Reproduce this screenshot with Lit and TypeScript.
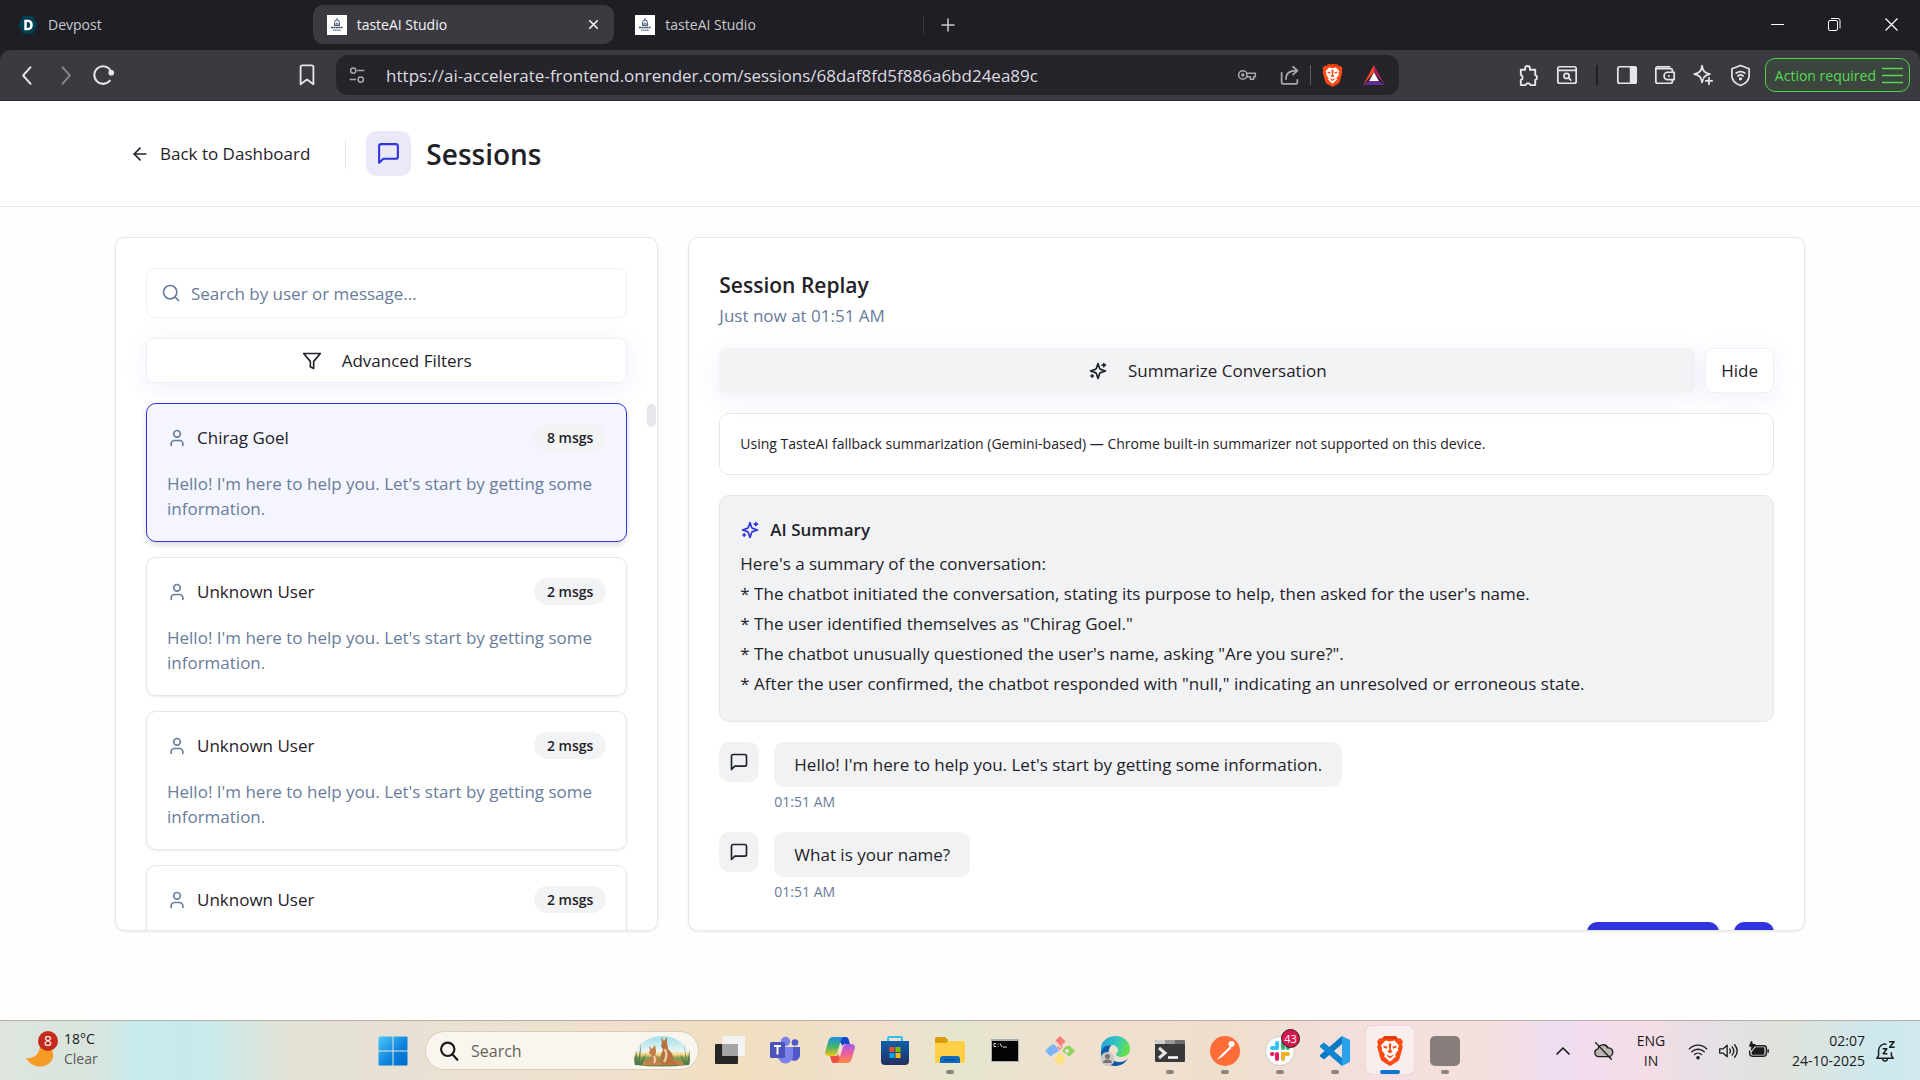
import { LitElement, html, svg, css, nothing, TemplateResult, SVGTemplateResult } from "lit";
import { customElement, state } from "lit/decorators.js";
import { classMap } from "lit/directives/class-map.js";

/* ---------- shared ---------- */

const base = css`
  :host {
    display: block;
    box-sizing: border-box;
    font-family: "Open Sans", "Noto Sans", "Liberation Sans", sans-serif;
    font-size: 17px;
    line-height: 25px;
    color: #1f2228;
  }
  * {
    box-sizing: border-box;
  }
  button,
  input {
    font: inherit;
    color: inherit;
    background: none;
    border: 0;
    padding: 0;
    margin: 0;
    outline: none;
  }
  svg {
    display: block;
    flex: none;
  }
  h1,
  h2,
  h3,
  p,
  ul {
    margin: 0;
    padding: 0;
    font-weight: inherit;
    font-size: inherit;
  }
  ul {
    list-style: none;
  }
`;

const line = (body: SVGTemplateResult, size = 20, width = 2): TemplateResult => html`<svg
  width=${size} height=${size} viewBox="0 0 24 24" fill="none" stroke="currentColor"
  stroke-width=${width} stroke-linecap="round" stroke-linejoin="round" aria-hidden="true">${body}</svg>`;

const glyph = (body: SVGTemplateResult, size = 30, box = 30): TemplateResult => html`<svg
  width=${size} height=${size} viewBox="0 0 ${box} ${box}" fill="none" aria-hidden="true">${body}</svg>`;

const icons = {
  arrowLeft: svg`<path d="m12 19-7-7 7-7"/><path d="M19 12H5"/>`,
  message: svg`<path d="M21 15a2 2 0 0 1-2 2H7l-4 4V5a2 2 0 0 1 2-2h14a2 2 0 0 1 2 2z"/>`,
  search: svg`<circle cx="11" cy="11" r="8"/><path d="m21 21-4.3-4.3"/>`,
  filter: svg`<polygon points="22 3 2 3 10 12.46 10 19 14 21 14 12.46 22 3"/>`,
  user: svg`<path d="M19 21v-2a4 4 0 0 0-4-4H9a4 4 0 0 0-4 4v2"/><circle cx="12" cy="7" r="4"/>`,
  sparkles: svg`<path d="m12 3-1.912 5.813a2 2 0 0 1-1.275 1.275L3 12l5.813 1.912a2 2 0 0 1 1.275 1.275L12 21l1.912-5.813a2 2 0 0 1 1.275-1.275L21 12l-5.813-1.912a2 2 0 0 1-1.275-1.275L12 3Z"/><path d="M5 16.5v3M3.5 18h3M19 3v4M17 5h4"/>`,
};

const lion = svg`
  <path d="M15 0 20.5 0 23 2.6 25.4 2.2 28 5.4 27 8.4 27.8 11 24.6 22.4Q24 24.4 22.4 25.6L15 30 7.6 25.6Q6 24.4 5.4 22.4L2.2 11 3 8.4 2 5.4 4.6 2.2 7 2.6 9.5 0Z" fill="#fb4b14"/>
  <path d="M15 0 20.5 0 23 2.6 20 3.4 15 2.6 10 3.4 7 2.6 9.5 0Z" fill="#e03c08"/>
  <path d="M15 5.4 19.4 4.5 24 9.6 22.8 12.4 23.2 14.2 20 18.6 21 20.2 15 25.8 9 20.2 10 18.6 6.8 14.2 7.2 12.4 6 9.6 10.6 4.5Z" fill="#fff"/>
  <path d="M8.2 9.8 12.6 10.6 11.8 12.8 8.8 11.8ZM21.8 9.8 17.4 10.6 18.2 12.8 21.2 11.8ZM13.6 7.4H16.4L15.8 13.6 17.6 15.6 15 17.4 12.4 15.6 14.2 13.6ZM11 18.4 15 20.2 19 18.4 17 21 15 22.2 13 21Z" fill="#fb4b14"/>`;

/* ---------- browser window frame ---------- */

const favicon = html`<svg width="20" height="20" viewBox="0 0 20 20" fill="none" aria-hidden="true">
  <rect width="20" height="20" fill="#fff"/>
  <path d="M10 3v2M7.5 7.5a2.5 2.5 0 0 1 5 0V10h-5zM8.5 8.2h3M7 10.4h6" stroke="#4b5876" stroke-width="1"/>
  <path d="M4 12.5h12" stroke="#39466a" stroke-width="1.6" stroke-dasharray="2 .4"/>
  <path d="M6 15.2h8" stroke="#7b859d" stroke-width="1.4" stroke-dasharray="1.6 .4"/>
</svg>`;

const devpostIcon = html`<svg width="20" height="20" viewBox="0 0 20 20" aria-hidden="true">
  <path d="M5.2 1h9.6L19.6 10l-4.8 9H5.2L.4 10z" fill="#003e54"/>
  <path fill-rule="evenodd" d="M6.3 4.8h3.4c3.4 0 5.1 2.1 5.1 5.200s-1.700 5.200-5.100 5.200H6.300zm2.500 2.200v6h.9c1.700 0 2.500-1.100 2.500-3s-.8-3-2.500-3z" fill="#fff"/>
</svg>`;

interface Tab {
  title: string;
  icon: TemplateResult;
  active?: boolean;
}

@customElement("browser-frame")
export class BrowserFrame extends LitElement {
  static styles = [
    base,
    css`
      :host {
        background: #1f1e24;
        color: #c9c8cd;
      }
      .strip {
        display: flex;
        height: 50px;
        padding: 5px 0 6px 4px;
      }
      .tabs {
        display: flex;
        gap: 7px;
        flex: 0 1 920px;
        min-width: 0;
      }
      .tab {
        flex: 1;
        min-width: 0;
        display: flex;
        align-items: center;
        gap: 10px;
        padding: 0 14px;
        border-radius: 10px;
        font-size: 14px;
      }
      .tab.active {
        background: #3b3a40;
        color: #f4f4f6;
      }
      .open {
        flex: 1;
        display: flex;
        align-items: center;
        gap: 10px;
        text-align: left;
        white-space: nowrap;
      }
      .add {
        display: flex;
        align-items: center;
        padding-left: 15px;
      }
      .tab:last-child {
        border-right: 1px solid #3c3b42;
        border-radius: 0;
        margin: 10px 0;
      }
      .window {
        display: flex;
        margin-left: auto;
      }
      .window button {
        width: 57px;
        display: flex;
        justify-content: center;
        align-items: center;
        color: #fff;
      }
      .bar {
        display: flex;
        align-items: center;
        height: 51px;
        padding: 0 10px 0 8px;
        background: #3b3a40;
        border-radius: 10px 10px 0 0;
        border-bottom: 1px solid #2b2a30;
        color: #e6e5ea;
      }
      .icon {
        width: 38px;
        height: 38px;
        display: flex;
        align-items: center;
        justify-content: center;
        flex: none;
      }
      .dim {
        color: #85848b;
      }
      .before {
        flex: 3 1 0;
      }
      .after {
        flex: 2 1 0;
      }
      .address {
        flex: 0 1 1063px;
        min-width: 0;
        display: flex;
        align-items: center;
        height: 40px;
        margin-left: 10px;
        padding: 0 4px 0 0;
        border-radius: 12px;
        background: #25242a;
        color: #a9a8ae;
      }
      .address input {
        flex: 1;
        min-width: 0;
        padding-left: 8px;
        color: #dcdbe0;
      }
      .address .icon {
        width: 42px;
      }
      .rule {
        width: 1px;
        height: 20px;
        background: #5c5b62;
        flex: none;
      }
      .rule.dark {
        width: 2px;
        margin: 0 10px;
        background: #202024;
      }
      .tools {
        display: flex;
        align-items: center;
      }
      .alert {
        display: flex;
        align-items: center;
        gap: 6px;
        height: 34px;
        margin-left: 5px;
        padding: 0 6px 0 9px;
        border: 1px solid #4cd44c;
        border-radius: 10px;
        background: #3c463f;
        color: #54d952;
        font-size: 14px;
        white-space: nowrap;
      }
    `,
  ];

  private tabs: Tab[] = [
    { title: "Devpost", icon: devpostIcon },
    { title: "tasteAI Studio", icon: favicon, active: true },
    { title: "tasteAI Studio", icon: favicon },
  ];

  render() {
    return html`
      <div class="strip">
        <div class="tabs">
          ${this.tabs.map(
            (t) => html`<div class=${classMap({ tab: true, active: !!t.active })}>
              <button class="open">${t.icon}${t.title}</button>
              ${t.active
                ? html`<button aria-label="Close tab">${line(svg`<path d="M5 5 19 19M19 5 5 19"/>`, 13, 3)}</button>`
                : nothing}
            </div>`,
          )}
        </div>
        <button class="add" aria-label="New tab">${line(svg`<path d="M12 4v16M4 12h16"/>`, 18, 2)}</button>
        <div class="window">
          <button aria-label="Minimize">${glyph(svg`<path d="M1 7.5h13" stroke="#fff"/>`, 15, 15)}</button>
          <button aria-label="Restore">
            ${glyph(svg`<rect x="1.5" y="3.5" width="9" height="10" rx="1.5" stroke="#fff"/><path d="M4 1.5h7a2 2 0 0 1 2 2v8" stroke="#fff"/>`, 15, 15)}
          </button>
          <button aria-label="Close window">${glyph(svg`<path d="M1.5 1.5 13.5 13.5M13.5 1.5 1.5 13.5" stroke="#fff" stroke-width="1.2"/>`, 15, 15)}</button>
        </div>
      </div>
      <div class="bar">
        <button class="icon" aria-label="Back">${line(svg`<path d="M15.5 2.5 7 12l8.5 9.5"/>`, 21, 2.2)}</button>
        <button class="icon dim" aria-label="Forward">${line(svg`<path d="M8.5 2.5 17 12l-8.5 9.5"/>`, 21, 2.2)}</button>
        <button class="icon" aria-label="Reload">
          ${line(svg`<path d="M19.5 18.2A9.6 9.6 0 1 1 20.8 8"/><circle cx="21" cy="9.5" r="2" fill="currentColor"/>`, 22, 2.2)}
        </button>
        <span class="before"></span>
        <button class="icon" aria-label="Bookmark">${line(svg`<path d="M5 3.5A2 2 0 0 1 7 1.500h10a2 2 0 0 1 2 2V22l-7-5-7 5z"/>`, 22, 2)}</button>
        <div class="address">
          <button class="icon" aria-label="Site settings">
            ${line(svg`<circle cx="7" cy="6" r="3.5"/><path d="M13 6h8M3 18h7"/><circle cx="17" cy="18" r="3.5"/>`, 18, 2)}
          </button>
          <input aria-label="Address" value="https://ai-accelerate-frontend.onrender.com/sessions/68daf8fd5f886a6bd24ea89c" />
          <button class="icon" aria-label="Passwords">
            ${line(svg`<circle cx="7" cy="12" r="5"/><circle cx="7" cy="12" r="1.2"/><path d="M12 10h10v4h-2v3h-4v-3h-4.5"/>`, 20, 1.8)}
          </button>
          <button class="icon" aria-label="Share">
            ${line(svg`<path d="M3 9v11a1.5 1.5 0 0 0 1.5 1.5h15A1.5 1.5 0 0 0 21 20v-3M8 16c0-6 4-9.5 12-9.5M16 2l5 4.500-5 4.500"/>`, 21, 2)}
          </button>
          <span class="rule"></span>
          <button class="icon" aria-label="Brave Shields">${glyph(lion, 23)}</button>
          <button class="icon" aria-label="Brave Rewards">
            ${glyph(svg`<path d="M12 2 1 22 12 9.5z" fill="#ff4724"/><path d="M12 2 23 22 12 9.5z" fill="#9e1f63"/><path d="M1 22H23L16.5 18H7.5z" fill="#662d91"/><path d="M12 9.5 16.8 18H7.2z" fill="#fff"/>`, 24, 24)}
          </button>
        </div>
        <span class="after"></span>
        <div class="tools">
          <button class="icon" aria-label="Extensions">
            ${line(svg`<path d="M4 6h4.5V4.500a2.500 2.500 0 0 1 5 0V6H19v5.500a2.600 2.600 0 0 1 0 5V22h-5a2.600 2.600 0 0 0-5 0H4v-5.500a2.600 2.600 0 0 0 0-5z"/>`, 23, 2)}
          </button>
          <button class="icon" aria-label="Search page">
            ${line(svg`<rect x="2" y="3" width="20" height="18" rx="2"/><path d="M2 7h20"/><circle cx="11.5" cy="13" r="2.8"/><path d="m14 15.5 2 2"/>`, 22, 1.9)}
          </button>
          <span class="rule dark"></span>
          <button class="icon" aria-label="Sidebar">
            ${line(svg`<rect x="2" y="3" width="20" height="18" rx="2"/><path d="M16 3h4a2 2 0 0 1 2 2v14a2 2 0 0 1-2 2h-4z" fill="currentColor"/>`, 22, 1.9)}
          </button>
          <button class="icon" aria-label="Wallet">
            ${line(svg`<path d="M20 9V7a2 2 0 0 0-2-2H2.500M2 5v14a2 2 0 0 0 2 2h14a2 2 0 0 0 2-2v-2M2 5a2 2 0 0 1 2-2h13M22 9h-7a4 4 0 0 0 0 8h7zM16 13h.5"/>`, 22, 1.9)}
          </button>
          <button class="icon" aria-label="Assistant">
            ${line(svg`<path d="M11 2c.8 5.500 2.500 7.500 8.500 9-3.500.8-5.500 2-6.800 4M11 2c-.8 5.500-2.500 7.500-8.500 9 6 1.500 7.700 3.500 8.500 9 .3-1 .6-2 1-3M18.500 15v7M15 18.500h7"/>`, 22, 1.9)}
          </button>
          <button class="icon" aria-label="VPN">
            ${line(svg`<path d="M12 1.500 21 5v7c0 5-3.500 8.500-9 10.500C6.500 20.500 3 17 3 12V5zM7.500 9.500c2.500-2.200 6.500-2.200 9 0M9.300 12.500c1.600-1.300 3.800-1.300 5.400 0"/><circle cx="12" cy="15.500" r=".8"/>`, 23, 1.8)}
          </button>
          <button class="alert">Action required ${glyph(svg`<path d="M0 3.500h21M0 10.500h21M0 17.500h21" stroke="#54d952" stroke-width="1.500"/>`, 21, 21)}</button>
        </div>
      </div>
    `;
  }
}

/* ---------- sessions page ---------- */

interface Session {
  name: string;
  count: number;
  preview: string;
}

interface Message {
  text: string;
  time: string;
  mine?: boolean;
}

@customElement("sessions-page")
export class SessionsPage extends LitElement {
  static styles = [
    base,
    css`
      :host {
        display: flex;
        flex-direction: column;
        min-height: 0;
        background: #fefefe;
      }
      header {
        background: #fff;
        border-bottom: 1px solid #e5e7eb;
      }
      .wrap {
        width: 100%;
        max-width: 1750px;
        margin: 0 auto;
        padding: 30px;
      }
      .top {
        display: flex;
        align-items: center;
        gap: 20px;
      }
      .back {
        display: flex;
        align-items: center;
        gap: 10px;
        padding: 10px 15px;
        color: inherit;
        text-decoration: none;
        font-weight: 500;
      }
      .divider {
        width: 1px;
        height: 30px;
        background: #e5e7eb;
      }
      .heading {
        display: flex;
        align-items: center;
        gap: 15px;
        font-size: 28px;
        line-height: 40px;
        font-weight: 600;
      }
      .badge {
        display: grid;
        place-items: center;
        width: 45px;
        height: 45px;
        border-radius: 10px;
        background: #eae9fa;
        color: #3133dd;
      }
      main {
        flex: 1;
        min-height: 0;
      }
      .columns {
        display: grid;
        grid-template-columns: repeat(3, minmax(0, 1fr));
        gap: 30px;
        height: 100%;
        padding-bottom: 89px;
      }
      .panel {
        display: flex;
        flex-direction: column;
        gap: 20px;
        min-height: 0;
        padding: 30px 30px 0;
        border: 1px solid #e5e7eb;
        border-radius: 10px;
        background: #fff;
        box-shadow: 0 1px 3px rgb(0 0 0 / 8%);
        overflow: hidden;
      }
      .replay {
        grid-column: span 2;
      }
      .panel > * {
        flex: none;
      }
      .find {
        display: flex;
        align-items: center;
        gap: 10px;
        height: 50px;
        padding: 0 14px;
        border: 1px solid #f0f1f6;
        border-radius: 8px;
        color: #697c9b;
      }
      .find input {
        flex: 1;
        min-width: 0;
      }
      .find input::placeholder {
        color: #697c9b;
        opacity: 1;
      }
      .btn {
        display: flex;
        align-items: center;
        justify-content: center;
        gap: 20px;
        height: 45px;
        padding: 0 15px;
        border: 1px solid #efeff7;
        border-radius: 8px;
        background: #fff;
        font-weight: 500;
        box-shadow: 0 5px 25px rgb(80 80 220 / 9%);
      }
      .btn.wide {
        flex: 1;
        border-color: #f2f3f5;
        background: #f2f3f5;
      }
      .sessions {
        position: relative;
        display: flex;
        flex-direction: column;
        gap: 15px;
      }
      .thumb {
        position: absolute;
        top: 1px;
        right: -29px;
        width: 9px;
        height: 23px;
        border-radius: 5px;
        background: #e5e7eb;
      }
      .session {
        display: block;
        width: 100%;
        padding: 20px;
        border: 1px solid #e5e7eb;
        border-radius: 10px;
        text-align: left;
        box-shadow: 0 1px 3px rgb(0 0 0 / 8%);
      }
      .session.active {
        border-color: #3133dd;
        background: #f4f5fe;
        box-shadow: 0 3px 6px rgb(0 0 0 / 14%);
      }
      .who {
        display: flex;
        align-items: center;
        gap: 10px;
        height: 27px;
        margin-bottom: 20px;
        font-weight: 500;
      }
      .who svg {
        color: #697c9b;
      }
      .count {
        margin-left: auto;
        padding: 1px 13px;
        border-radius: 14px;
        background: #f2f3f5;
        font-size: 14px;
        font-weight: 600;
      }
      .preview,
      .when,
      .stamp {
        color: #697c9b;
      }
      .title {
        font-size: 21px;
        line-height: 35px;
        font-weight: 600;
      }
      .row {
        display: flex;
        gap: 10px;
      }
      .notice {
        padding: 20px;
        border: 1px solid #e5e7eb;
        border-radius: 10px;
        font-size: 14px;
        line-height: 20px;
      }
      .summary {
        padding: 20px 20px 22px;
        border: 1px solid #e5e7eb;
        border-radius: 10px;
        background: #f1f2f4;
        line-height: 30px;
      }
      .summary h3 {
        display: flex;
        align-items: center;
        gap: 10px;
        margin-bottom: 5px;
        line-height: 28px;
        font-weight: 600;
      }
      .summary svg {
        color: #3133dd;
      }
      .message {
        display: flex;
        align-items: flex-start;
        gap: 15px;
      }
      .message.mine {
        flex-direction: row-reverse;
      }
      .avatar {
        display: grid;
        place-items: center;
        width: 40px;
        height: 40px;
        border-radius: 10px;
        background: #f1f2f4;
      }
      .bubble {
        padding: 10px 20px;
        border-radius: 10px;
        background: #f1f2f4;
      }
      .mine .bubble,
      .mine .avatar {
        background: #3133dd;
        color: #fff;
      }
      .stamp {
        margin-top: 5px;
        font-size: 14px;
        line-height: 20px;
      }
    `,
  ];

  @state() private selected = 0;

  private sessions: Session[] = ["Chirag Goel", "Unknown User", "Unknown User", "Unknown User"].map((name, i) => ({
    name,
    count: i ? 2 : 8,
    preview: "Hello! I'm here to help you. Let's start by getting some information.",
  }));

  private messages: Message[] = [
    { text: "Hello! I'm here to help you. Let's start by getting some information.", time: "01:51 AM" },
    { text: "What is your name?", time: "01:51 AM" },
    { text: "Chirag Goel", time: "01:51 AM", mine: true },
  ];

  private summary = [
    "Here's a summary of the conversation:",
    "* The chatbot initiated the conversation, stating its purpose to help, then asked for the user's name.",
    '* The user identified themselves as "Chirag Goel."',
    '* The chatbot unusually questioned the user\'s name, asking "Are you sure?".',
    '* After the user confirmed, the chatbot responded with "null," indicating an unresolved or erroneous state.',
  ];

  render() {
    return html`
      <header>
        <div class="wrap top">
          <a class="back" href="#dashboard">${line(icons.arrowLeft)}Back to Dashboard</a>
          <span class="divider"></span>
          <div class="heading">
            <span class="badge">${line(icons.message, 25)}</span>
            <h1>Sessions</h1>
          </div>
        </div>
      </header>
      <main>
        <div class="wrap columns">
          <section class="panel">
            <label class="find">
              ${line(icons.search)}
              <input type="text" placeholder="Search by user or message..." aria-label="Search by user or message" />
            </label>
            <button class="btn">${line(icons.filter)}Advanced Filters</button>
            <ul class="sessions">
              ${this.sessions.map(
                (s, i) => html`<li>
                  <button
                    class=${classMap({ session: true, active: i === this.selected })}
                    @click=${() => (this.selected = i)}
                  >
                    <div class="who">${line(icons.user)}${s.name}<span class="count">${s.count} msgs</span></div>
                    <div class="preview">${s.preview}</div>
                  </button>
                </li>`,
              )}
              <li class="thumb" aria-hidden="true"></li>
            </ul>
          </section>
          <section class="panel replay">
            <div>
              <h2 class="title">Session Replay</h2>
              <p class="when">Just now at 01:51 AM</p>
            </div>
            <div class="row">
              <button class="btn wide">${line(icons.sparkles)}Summarize Conversation</button>
              <button class="btn">Hide</button>
            </div>
            <p class="notice">
              Using TasteAI fallback summarization (Gemini-based) — Chrome built-in summarizer not supported on this device.
            </p>
            <div class="summary">
              <h3>${line(icons.sparkles)}AI Summary</h3>
              ${this.summary.map((l) => html`<p>${l}</p>`)}
            </div>
            ${this.messages.map(
              (m) => html`<div class=${classMap({ message: true, mine: !!m.mine })}>
                <span class="avatar">${line(m.mine ? icons.user : icons.message)}</span>
                <div>
                  <p class="bubble">${m.text}</p>
                  <p class="stamp">${m.time}</p>
                </div>
              </div>`,
            )}
          </section>
        </div>
      </main>
    `;
  }
}

/* ---------- desktop taskbar ---------- */

interface App {
  label: string;
  art: SVGTemplateResult;
  running?: boolean;
  focused?: boolean;
}

const apps: App[] = [
  {
    label: "Task view",
    art: svg`<rect x="0" y="8" width="23" height="20" rx="1" fill="#262626"/><rect x="7.5" y="0" width="22.5" height="20" rx="1" fill="#f3f3f3"/><rect x="7.5" y="8" width="15.5" height="12" fill="#a5a5a3"/>`,
  },
  {
    label: "Teams",
    art: svg`<circle cx="25" cy="6.5" r="3.3" fill="#5059c9"/><circle cx="15.5" cy="5.5" r="4.7" fill="#7b83eb"/><path d="M21 11h9v8a5.5 5.5 0 0 1-9 4.5z" fill="#5059c9"/><path d="M8 11h15v9a7.5 7.5 0 0 1-15 0z" fill="#7b83eb"/><rect x="0" y="6" width="15" height="16" rx="1.5" fill="#4b53bc"/><path d="M4 10h7M7.5 10v8.5" stroke="#fff" stroke-width="2"/>`,
  },
  {
    label: "Copilot",
    art: svg`<defs><linearGradient id="ca" x1="0" y1="0" x2="0" y2="1"><stop stop-color="#1b8fe8"/><stop offset=".5" stop-color="#3fb56f"/><stop offset="1" stop-color="#f3c417"/></linearGradient><linearGradient id="cb" x1="0" y1="0" x2="0" y2="1"><stop stop-color="#a25cf0"/><stop offset=".5" stop-color="#ec5f9c"/><stop offset="1" stop-color="#fb8d42"/></linearGradient></defs>
      <path d="M12 1h9q2 0 2.600 2L25 8h-5q-2 0-2.500 2z" fill="#1748c9"/><path d="M18 27H9q-2 0-2.600-2L5 20h6q1.500 0 2-2z" fill="#ee4f45"/>
      <path d="M8 1h11q-2 0-3 3l-4 13q-1 3-4 3H4Q-1 20 .5 15L3.500 4.500Q4.500 1 8 1z" fill="url(#ca)"/>
      <path d="M22 27H11q2 0 3-3l4-13q1-3 4-3h4q5 0 3.500 5l-3 10.500Q25.500 27 22 27z" fill="url(#cb)"/>`,
  },
  {
    label: "Store",
    art: svg`<defs><linearGradient id="st" x1="0" y1="0" x2="0" y2="1"><stop stop-color="#0f5fae"/><stop offset="1" stop-color="#22305e"/></linearGradient></defs><path d="M8 6V2.500Q8 1 9.500 1h11Q22 1 22 2.500V6" stroke="#2cc0f0" stroke-width="2"/><path d="M1 5h28v20a4 4 0 0 1-4 4H5a4 4 0 0 1-4-4z" fill="url(#st)"/><path d="M9.500 11h5v5h-5z" fill="#f25022"/><path d="M15.500 11h5v5h-5z" fill="#7fba00"/><path d="M9.500 17h5v5h-5z" fill="#00a4ef"/><path d="M15.500 17h5v5h-5z" fill="#ffb900"/>`,
  },
  {
    label: "File Explorer",
    running: true,
    art: svg`<path d="M0 3q0-2 2-2h8l3 3v5H0z" fill="#d99a0b"/><path d="M0 7h11l2-2h15q2 0 2 2v18q0 2-2 2H2q-2 0-2-2z" fill="#ffcf45"/><path d="M5 27v-4q0-3 3-3h14q3 0 3 3v4z" fill="#0f6cbd"/><path d="M9 24h12" stroke="#0a4f92" stroke-width="1.5"/>`,
  },
  {
    label: "Command Prompt",
    art: svg`<rect x="1" y="3" width="28" height="23" fill="#aab0b8"/><rect x="2" y="5" width="26" height="20" fill="#050505"/><path d="M4 7.5h2M4 7.5v3h2M8 8v.8M8 10v.8M10 7.5l2 3.5M13 11h4" stroke="#ddd"/>`,
  },
  {
    label: "Git",
    art: svg`<path d="M15 0 20.500 5.500 15 11 9.500 5.500z" fill="#f97c79"/><path d="M15 8 18 11 15 14 12 11z" fill="#f97c79"/><path d="M24.500 9.500 30 15 24.500 20.500 17 15l3-4z" fill="#8fd45f"/><path d="M5.500 9.500 13 15 5.500 20.500 0 15z" fill="#7fb3f8"/><path d="M5.500 9.500 9 8l5 6-1 2z" fill="#7fb3f8"/><path d="M15 16l6 7.500L15 30l-6-6.500z" fill="#fbe07c"/><circle cx="22" cy="15" r="2" fill="#efe1d2"/><path d="m10 5 6 7" stroke="#efe1d2" stroke-width="1.500"/>`,
  },
  {
    label: "Edge",
    art: svg`<defs><linearGradient id="eg" x1="0" y1="0" x2="1" y2=".3"><stop stop-color="#1e9be0"/><stop offset=".6" stop-color="#35c8c0"/><stop offset="1" stop-color="#63e04f"/></linearGradient></defs><path d="M1 12C1 5 8 0 15.500 0 24 0 30 6 30 13c0 5-4 8-9 8-3 0-5-1-5-2.500 0-1 2-1.500 2-4.500 0-3-3-5-6.500-5C6 9 1 13 1 20z" fill="url(#eg)"/><path d="M1 20C0 12 6 9 11.500 9q-3 3-3 7c0 6 5 10 11 10 4 0 7-2 8.500-4-3 6-8 8-13 8C8 30 2 26 1 20z" fill="#0f5aa8"/><circle cx="7.500" cy="23" r="7" fill="#c9c9c9"/><circle cx="7.500" cy="20.500" r="2.500" fill="#77736f"/><path d="M3 27q0-3.500 4.500-3.500T12 27z" fill="#77736f"/>`,
  },
  {
    label: "Terminal",
    running: true,
    art: svg`<rect x="0" y="4" width="30" height="22" rx="1.5" fill="#38393b"/><path d="M0 8V5.500Q0 4 1.500 4H10v4z" fill="#cfcfcf"/><path d="M10 4h10v4H10z" fill="#9a9a9a"/><path d="M20 4h8.500Q30 4 30 5.500V8H20z" fill="#6d6d6d"/><path d="m4 12 6 5-6 5" stroke="#e8e8e8" stroke-width="3"/><path d="M13 21.500h10" stroke="#fff" stroke-width="2.500"/>`,
  },
  {
    label: "Postman",
    running: true,
    art: svg`<circle cx="15" cy="15" r="15" fill="#ff6c37"/><circle cx="21.5" cy="8" r="3" fill="#fff"/><path d="M20 10 10.500 19.500 6.500 24 12 21 21.500 12z" fill="#fff"/><path d="m11 18 8-7.500" stroke="#ff6c37" stroke-width=".8"/>`,
  },
  {
    label: "Slack",
    running: true,
    art: svg`<circle cx="15" cy="15" r="14.5" fill="#fbfbfb" stroke="#d0cdca"/><g stroke-width="4" stroke-linecap="round"><path d="M12 7v4.500M7 12h5" stroke="#36c5f0"/><path d="M18 7v5M23 12h-.5" stroke="#2eb67d"/><path d="M18 23v-5h5" stroke="#ecb22e"/><path d="M12 23v-5M7 18h.5" stroke="#e01e5a"/></g>`,
  },
  {
    label: "Visual Studio Code",
    running: true,
    art: svg`<path d="M22 0 30 4v22l-8 4z" fill="#2ba3ec"/><path d="M22 0v8L4 23.500 0 20.500V19z" fill="#0b78c4"/><path d="M22 30v-8L4 6.500 0 9.500V11z" fill="#1283d0"/>`,
  },
  { label: "Brave", running: true, focused: true, art: lion },
  { label: "Application", running: true, art: svg`<rect width="30" height="30" rx="5" fill="#877e7b"/>` },
];

@customElement("task-bar")
export class TaskBar extends LitElement {
  static styles = [
    base,
    css`
      :host {
        display: flex;
        height: 60px;
        border-top: 1px solid #b4b0a8;
        background: linear-gradient(
          90deg,
          #dee5df 0%,
          #d8e4dd 5%,
          #c7eaec 7%,
          #c9e9ea 11%,
          #e3e2d6 15%,
          #ebe1d2 25%,
          #f0e0cb 33%,
          #f0dfc0 38%,
          #f0e0cb 46%,
          #e6e6ce 50%,
          #f0e0d0 56%,
          #eedfcd 64%,
          #f3dfe0 72%,
          #f4e0dc 77%,
          #f0ddf2 81%,
          #f4dde6 86%,
          #e6e0e6 89%,
          #dfe3dc 93%,
          #cde8ef 98%,
          #d2e9f0 100%
        );
        font-size: 14px;
        line-height: 20px;
        color: #1b1b1b;
      }
      .weather {
        flex: 0 1 365px;
        display: flex;
        align-items: center;
        gap: 6px;
        padding: 0 0 4px 26px;
        text-align: left;
      }
      .weather span {
        display: block;
      }
      .weather .soft {
        color: #5b5b58;
      }
      .center {
        display: flex;
        align-items: center;
      }
      .app {
        position: relative;
        width: 55px;
        height: 59px;
        display: grid;
        place-items: center;
      }
      .app svg {
        position: relative;
      }
      .app.focused::before {
        content: "";
        position: absolute;
        inset: 5px 3px 6px 4px;
        border-radius: 5px;
        background: #f8efec;
        box-shadow: 0 0 1px rgb(0 0 0 / 30%);
      }
      .app.running::after {
        content: "";
        position: absolute;
        bottom: 6px;
        width: 8px;
        height: 4px;
        border-radius: 2px;
        background: #8b857c;
      }
      .app.focused::after {
        width: 20px;
        background: #0a76d4;
      }
      .count {
        position: absolute;
        top: 8px;
        right: 7px;
        width: 19px;
        height: 19px;
        border: 1px solid #3c1320;
        border-radius: 10px;
        background: #d8184f;
        color: #fff;
        font-size: 11px;
        line-height: 17px;
        text-align: center;
      }
      .find {
        display: flex;
        align-items: center;
        gap: 12px;
        width: 274px;
        height: 39px;
        margin: 0 3px 0 5px;
        padding: 0 6px 0 13px;
        border: 1px solid #d8ccbc;
        border-radius: 20px;
        background: #faf5ee;
        font-size: 16px;
      }
      .find input {
        flex: 1;
        min-width: 0;
      }
      .find input::placeholder {
        color: #66625d;
        opacity: 1;
      }
      .tray {
        display: flex;
        align-items: center;
        margin-left: auto;
        padding-right: 20px;
        text-align: center;
      }
      .tray button {
        display: flex;
        align-items: center;
        justify-content: center;
        min-width: 30px;
      }
      .tray .open {
        width: 40px;
      }
      .tray .language {
        display: block;
        width: 50px;
        margin: 0 7px 0 3px;
      }
      .tray .clock {
        display: block;
        width: 92px;
        margin-right: 5px;
        text-align: right;
      }
    `,
  ];

  render() {
    return html`
      <button class="weather">
        <svg width="32" height="38" viewBox="0 0 32 38" aria-hidden="true">
          <path d="M0 28c8 1 14-4 14-13 10-2 16 8 12 15-5 9-20 9-26-2z" fill="#f59a25" />
          <circle cx="22" cy="11" r="10" fill="#c42b1c" />
          <text x="22" y="16" font-size="14" fill="#fff" text-anchor="middle">8</text>
        </svg>
        <span>18°C<span class="soft">Clear</span></span>
      </button>
      <div class="center">
        <button class="app" aria-label="Start">
          ${glyph(svg`<defs><linearGradient id="w" x1="0" y1="0" x2="1" y2="1"><stop stop-color="#4cc9f8"/><stop offset=".6" stop-color="#0a80dc"/><stop offset="1" stop-color="#0069c8"/></linearGradient></defs><path d="M.5 1.500Q.5.500 1.500.500H14.500V14.500H.5zM15.500.500H28.500q1 0 1 1V14.500H15.500zM.5 15.500H14.500V29.500H1.500q-1 0-1-1zM15.500 15.500H29.500v13q0 1-1 1H15.500z" fill="url(#w)"/>`)}
        </button>
        <label class="find">
          ${line(svg`<circle cx="10.5" cy="10" r="8"/><path d="m16 16 6 6.5"/>`, 20, 2.6)}
          <input type="text" placeholder="Search" aria-label="Search" />
          <svg width="60" height="32" viewBox="0 0 60 32" aria-hidden="true">
            <defs>
              <linearGradient id="sky" x1="0" y1="0" x2="0" y2="1">
                <stop stop-color="#9fe0ea" />
                <stop offset=".5" stop-color="#e9f4f2" />
                <stop offset=".62" stop-color="#f7d27a" />
                <stop offset=".7" stop-color="#8aa35a" />
                <stop offset="1" stop-color="#6f7f3f" />
              </linearGradient>
            </defs>
            <path d="M3 30C-2 16 12 1 30 1s32 15 27 29q-27 3-54 0z" fill="url(#sky)" />
            <path d="M3 30q12-8 25-3 14-6 29 3z" fill="#b9854a" />
            <path d="M3 30 4 15l2 13L9 8 8 28l6-10-4 12zM57 30l1-16-3 14L52 8l2 20-6-9 4 11z" fill="#4c7a4a" />
            <path d="M30 8 29 2l3 4 3-4v6q1 4 1 6 6 5 5 11l5 5H30q-3-8 1-15l-2-4z" fill="#b9703f" />
            <path d="M33 14q3 7-1 13" stroke="#eccba4" stroke-width="2.5" fill="none" />
            <path d="m18 15-1-4 3 3 3-4 1 6q0 3-1 4 5 3 3 7l2 3H17q-1-6 3-9l-3-3z" fill="#c57d49" />
            <path d="M22 21q2 4 0 7" stroke="#f0d5b2" stroke-width="2" fill="none" />
          </svg>
        </label>
        ${apps.map(
          (a) => html`<button
            class=${classMap({ app: true, running: !!a.running, focused: !!a.focused })}
            aria-label=${a.label}
          >
            ${glyph(a.art)}${a.label === "Slack" ? html`<span class="count">43</span>` : nothing}
          </button>`,
        )}
      </div>
      <div class="tray">
        <button class="open" aria-label="Show hidden icons">${line(svg`<path d="m4 16 8-8 8 8"/>`, 18, 2.2)}</button>
        <button class="open" aria-label="OneDrive">
          ${line(svg`<path d="M6.5 19a4.5 4.5 0 0 1-.8-8.9A6 6 0 0 1 17 9a5 5 0 0 1 1 10z" fill="#bdb4b4"/><path d="M3 3l18 19"/>`, 21, 1.6)}
        </button>
        <button class="language">ENG<br />IN</button>
        <button aria-label="Wi-Fi">
          ${line(svg`<path d="M1.5 9.5c6-6 15-6 21 0M4.5 13c4.2-4.2 10.8-4.2 15 0M7.8 16.3c2.4-2.4 6-2.4 8.4 0"/><circle cx="12" cy="20" r="1.3" fill="currentColor"/>`, 20, 1.6)}
        </button>
        <button aria-label="Volume">
          ${line(svg`<path d="M2 9.5h4L11 5v14l-5-4.5H2zM14 9.5q2 2.5 0 5M17 7q4 5 0 10M20 4.5q6 7.5 0 15"/>`, 20, 1.6)}
        </button>
        <button aria-label="Battery">
          ${line(svg`<path d="M8 6.5h10a3 3 0 0 1 3 3v6a3 3 0 0 1-3 3H5a3 3 0 0 1-3-3v-3"/><path d="M9 9h9v7H5v-2z" fill="currentColor"/><path d="M23 11v3"/><path d="M4 2 2 7h3L4 11l4-5.5H5z" fill="currentColor"/>`, 21, 1.6)}
        </button>
        <button class="clock">02:07<br />24-10-2025</button>
        <button aria-label="Notifications">
          ${line(svg`<path d="M13 4.5A7 7 0 0 0 5 11v6l-2 3h18l-2-3v-3M9.5 20.5a2.5 2.5 0 0 0 5 0M17 2h5l-5 6h5M10 9.5h4L10 15h4"/>`, 22, 1.6)}
        </button>
      </div>
    `;
  }
}

/* ---------- root ---------- */

@customElement("app-root")
export class AppRoot extends LitElement {
  static styles = css`
    :host {
      display: flex;
      flex-direction: column;
      height: 100vh;
      overflow: hidden;
    }
    sessions-page {
      flex: 1;
    }
  `;

  render() {
    return html`<browser-frame></browser-frame><sessions-page></sessions-page><task-bar></task-bar>`;
  }
}
